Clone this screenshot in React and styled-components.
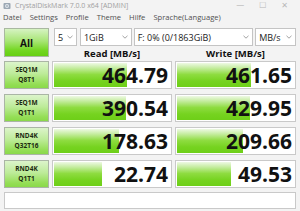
import React from "react";
import styled, { createGlobalStyle } from "styled-components";

const Global = createGlobalStyle`
  html, body { margin: 0; padding: 0; background: #f3f3f3; }
  body { font-family: "Open Sans", "Noto Sans", sans-serif; }
`;

const Window = styled.div`
  width: 300px;
  height: 211px;
  background: #f3f3f3;
  overflow: hidden;
  display: flex;
  flex-direction: column;
`;

const TitleBar = styled.div`
  height: 11px;
  display: flex;
  align-items: center;
  padding-left: 3px;
  gap: 4px;
  color: #a0a0a0;
  font-size: 7px;
`;

const TitleText = styled.span`
  flex: 1;
  white-space: nowrap;
`;

const WinControls = styled.div`
  display: flex;
  gap: 15px;
  padding-right: 12px;
  color: #b8b8b8;
  font-size: 8px;
  font-family: "DejaVu Sans", sans-serif;
`;

const MenuBar = styled.div`
  height: 12px;
  display: flex;
  align-items: center;
  gap: 8px;
  padding-left: 3px;
  font-size: 7.6px;
  color: #505050;
`;

const Main = styled.div`
  margin-top: 5px;
  padding-left: 4px;
  display: grid;
  grid-template-columns: 45px 120px 121px;
  grid-template-rows: 18px 15px 28px repeat(3, 33px) 21px;
  column-gap: 3px;
`;

const AllButton = styled.div`
  grid-row: 1 / 3;
  grid-column: 1;
  height: 29px;
  box-sizing: border-box;
  border: 1px solid #a9b8a0;
  background: linear-gradient(to bottom, #d6f3c2 0%, #a7e574 45%, #72d61f 80%, #66cf12 100%);
  display: flex;
  align-items: center;
  justify-content: center;
  font-weight: 700;
  font-size: 10px;
  color: #111;
`;

const Controls = styled.div`
  grid-row: 1;
  grid-column: 2 / 4;
  display: flex;
  gap: 2px;
  margin-left: 2px;
`;

const Select = styled.div`
  width: ${(p) => p.$w}px;
  margin-right: ${(p) => p.$mr || 0}px;
  box-sizing: border-box;
  height: 18px;
  border: 1px solid #c4c4c4;
  background: #fff;
  display: flex;
  align-items: center;
  justify-content: space-between;
  padding: 0 3px 0 3px;
  font-size: 9px;
  color: #222;
  white-space: nowrap;
`;

const Chevron = styled.svg`
  width: 6px;
  height: 4px;
  flex-shrink: 0;
`;

const Header = styled.div`
  grid-row: 2;
  grid-column: ${(p) => p.$col};
  display: flex;
  align-items: center;
  justify-content: center;
  font-weight: 700;
  font-size: 9.5px;
  color: #111;
`;

const Label = styled.div`
  grid-column: 1;
  box-sizing: border-box;
  height: 28px;
  border: 1px solid #aab5a5;
  background: linear-gradient(to bottom, #dcf4cb 0%, #bdeb99 45%, #94de55 85%, #8ad94a 100%);
  display: flex;
  flex-direction: column;
  align-items: center;
  justify-content: center;
  font-weight: 700;
  font-size: 6.5px;
  line-height: 10px;
  color: #1c2a10;
  margin-top: ${(p) => p.$mt}px;
`;

const Cell = styled.div`
  position: relative;
  box-sizing: border-box;
  height: 28px;
  border: 1px solid #c9c9c9;
  background: #fff;
  display: flex;
  align-items: center;
  justify-content: flex-end;
  padding-right: 3px;
  margin-top: ${(p) => p.$mt}px;
  overflow: hidden;
`;

const Bar = styled.div`
  position: absolute;
  left: 1px;
  top: 1px;
  bottom: 1px;
  background: linear-gradient(to bottom, #eef9e4 0%, #c3ec9c 22%, #8edc40 48%, #76d320 75%, #6ecf18 100%);
`;

const Value = styled.span`
  position: relative;
  font-weight: 700;
  font-size: 21px;
  line-height: 1;
  color: #111;
`;

const Comment = styled.div`
  grid-column: 1 / 4;
  margin-top: 4px;
  height: 17px;
  box-sizing: border-box;
  border: 1px solid #c9c9c9;
  background: #fff;
`;

const ChevronIcon = () => (
  <Chevron viewBox="0 0 6 4">
    <path d="M0.5 0.8 L3 3.2 L5.5 0.8" fill="none" stroke="#8a8a8a" strokeWidth="0.8" />
  </Chevron>
);

const AppIcon = () => (
  <svg width="8" height="8" viewBox="0 0 8 8">
    <rect x="0.5" y="1" width="7" height="6" rx="1" fill="#9aa6b2" />
    <circle cx="4" cy="4" r="2" fill="#dfe6ec" />
    <circle cx="4" cy="4" r="0.7" fill="#6b7a88" />
  </svg>
);

const rows = [
  { l1: "SEQ1M", l2: "Q8T1", r: "464.79", w: "461.65", rb: 73, wb: 74 },
  { l1: "SEQ1M", l2: "Q1T1", r: "390.54", w: "429.95", rb: 72, wb: 73 },
  { l1: "RND4K", l2: "Q32T16", r: "178.63", w: "209.66", rb: 65, wb: 66 },
  { l1: "RND4K", l2: "Q1T1", r: "22.74", w: "49.53", rb: 48, wb: 54 },
];

export default function App() {
  return (
    <>
      <Global />
      <Window>
        <TitleBar>
          <AppIcon />
          <TitleText>CrystalDiskMark 7.0.0 x64 [ADMIN]</TitleText>
          <WinControls>
            <span>—</span>
            <span>☐</span>
            <span>✕</span>
          </WinControls>
        </TitleBar>
        <MenuBar>
          <span>Datei</span>
          <span>Settings</span>
          <span>Profile</span>
          <span>Theme</span>
          <span>Hilfe</span>
          <span>Sprache(Language)</span>
        </MenuBar>
        <Main>
          <AllButton>All</AllButton>
          <Controls>
            <Select $w={23} $mr={1}>5<ChevronIcon /></Select>
            <Select $w={52}>1GiB<ChevronIcon /></Select>
            <Select $w={120}>F: 0% (0/1863GiB)<ChevronIcon /></Select>
            <Select $w={41}>MB/s<ChevronIcon /></Select>
          </Controls>
          <Header $col={2}>Read [MB/s]</Header>
          <Header $col={3}>Write [MB/s]</Header>
          {rows.map((r, i) => {
            const mt = i === 0 ? 0 : 5;
            return (
              <React.Fragment key={i}>
                <Label $mt={mt}>
                  <span>{r.l1}</span>
                  <span>{r.l2}</span>
                </Label>
                <Cell $mt={mt}>
                  <Bar style={{ width: `${r.rb}px` }} />
                  <Value>{r.r}</Value>
                </Cell>
                <Cell $mt={mt}>
                  <Bar style={{ width: `${r.wb}px` }} />
                  <Value>{r.w}</Value>
                </Cell>
              </React.Fragment>
            );
          })}
          <Comment />
        </Main>
      </Window>
    </>
  );
}
